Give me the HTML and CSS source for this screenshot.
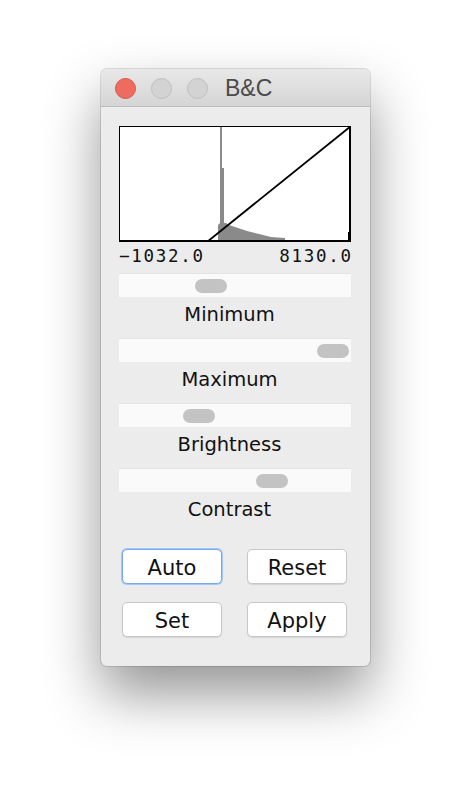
FILE: index.html
```html
<!DOCTYPE html>
<html>
<head>
<meta charset="utf-8">
<link rel="stylesheet" href="styles.css">
</head>
<body>
<div class="stage">
  <div class="window">
    <div class="titlebar">
      <span class="light close"></span>
      <span class="light off"></span>
      <span class="light off"></span>
      <span class="title">B&amp;C</span>
    </div>
    <div class="content">
      <svg class="histo" width="232" height="116" viewBox="0 0 232 116">
        <rect x="0" y="0" width="232" height="116" fill="#fff"/>
        <line x1="102" y1="1" x2="102" y2="114" stroke="#8c8c8c" stroke-width="2"/>
        <rect x="102" y="42" width="3" height="72" fill="#8a8a8a"/>
        <polygon fill="#8a8a8a" points="99,114 99,99 101,97 107,97 110,99 116,101 122,103 128,105 136,107 144,109 152,111 166,112 166,114"/>
        <line x1="88" y1="116" x2="232" y2="0" stroke="#000" stroke-width="1.8"/>
        <rect x="229" y="106" width="3" height="10" fill="#000"/>
        <rect x="0.5" y="0.5" width="231" height="115" fill="none" stroke="#000" stroke-width="1"/>
        <rect x="0" y="114" width="232" height="2" fill="#000"/>
        <rect x="230" y="0" width="2" height="116" fill="#000"/>
      </svg>
      <div class="range-labels">
        <span>−1032.0</span>
        <span class="right">8130.0</span>
      </div>
      <div class="sliders">
        <div class="slider">
          <div class="track"><span class="thumb" style="margin-left:76px"></span></div>
          <div class="label">Minimum</div>
        </div>
        <div class="slider">
          <div class="track"><span class="thumb" style="margin-left:198px"></span></div>
          <div class="label">Maximum</div>
        </div>
        <div class="slider">
          <div class="track"><span class="thumb" style="margin-left:64px"></span></div>
          <div class="label">Brightness</div>
        </div>
        <div class="slider">
          <div class="track"><span class="thumb" style="margin-left:137px"></span></div>
          <div class="label">Contrast</div>
        </div>
      </div>
      <div class="buttons">
        <button class="btn focus">Auto</button>
        <button class="btn">Reset</button>
        <button class="btn">Set</button>
        <button class="btn">Apply</button>
      </div>
    </div>
  </div>
</div>
</body>
</html>
```
FILE: styles.css
```css
html, body {
  margin: 0;
  padding: 0;
  background: #ffffff;
  min-height: 100%;
}
.stage {
  padding: 69px 0 134px 101px;
}
.window {
  width: 269px;
  height: 597px;
  box-sizing: border-box;
  background: #ececec;
  border-radius: 6px;
  box-shadow: 0 0 0 1px rgba(0,0,0,0.12), 0 28px 56px rgba(0,0,0,0.42);
  overflow: hidden;
}
.titlebar {
  height: 38px;
  box-sizing: border-box;
  border-bottom: 1px solid #bcbcbc;
  background: linear-gradient(#e8e8e8, #d5d5d5);
  display: flex;
  align-items: center;
  padding-left: 14px;
  padding-top: 1px;
  gap: 15px;
}
.light {
  width: 21px;
  height: 21px;
  box-sizing: border-box;
  border-radius: 50%;
  flex: none;
}
.light.close {
  background: #ee6b60;
  border: 1px solid #d8554b;
}
.light.off {
  background: #d3d3d3;
  border: 1px solid #bfbfbf;
}
.title {
  margin-left: 2px;
  font-family: "Liberation Sans", Arial, sans-serif;
  font-size: 23px;
  color: #4b4b4b;
}
.content {
  padding: 19px 19px 0 18px;
}
.histo {
  display: block;
}
.range-labels {
  display: flex;
  justify-content: space-between;
  margin-top: 4px;
  font-family: "DejaVu Sans Mono", monospace;
  font-size: 17.5px;
  line-height: 20px;
  letter-spacing: 1.7px;
  color: #111;
}
.range-labels .right {
  margin-right: -1.7px;
}
.sliders {
  margin-top: 7px;
  display: flex;
  flex-direction: column;
  gap: 11px;
}
.track {
  height: 24px;
  box-sizing: border-box;
  background: #fafafa;
  border-top: 1px solid #e3e3e3;
  padding-top: 5px;
  display: flex;
  align-items: flex-start;
}
.thumb {
  width: 32px;
  height: 14px;
  border-radius: 7px;
  background: #c3c3c3;
  flex: none;
}
.label {
  margin-top: 6px;
  padding-right: 11px;
  height: 24px;
  line-height: 24px;
  text-align: center;
  font-family: "DejaVu Sans", sans-serif;
  font-size: 19.5px;
  color: #111;
}
.buttons {
  margin: 27px 0 0 3px;
  display: grid;
  grid-template-columns: 100px 100px;
  grid-auto-rows: 35px;
  column-gap: 25px;
  row-gap: 18px;
}
.btn {
  margin: 0;
  padding: 2px 0 0 0;
  box-sizing: border-box;
  background: #ffffff;
  border: 1px solid #c7c7c7;
  border-radius: 5px;
  box-shadow: 0 1px 1px rgba(0,0,0,0.10);
  font-family: "DejaVu Sans", sans-serif;
  font-size: 21px;
  color: #111;
}
.btn.focus {
  border-color: #76a8f2;
  box-shadow: 0 0 0 1px #a6c7f6;
}
```
